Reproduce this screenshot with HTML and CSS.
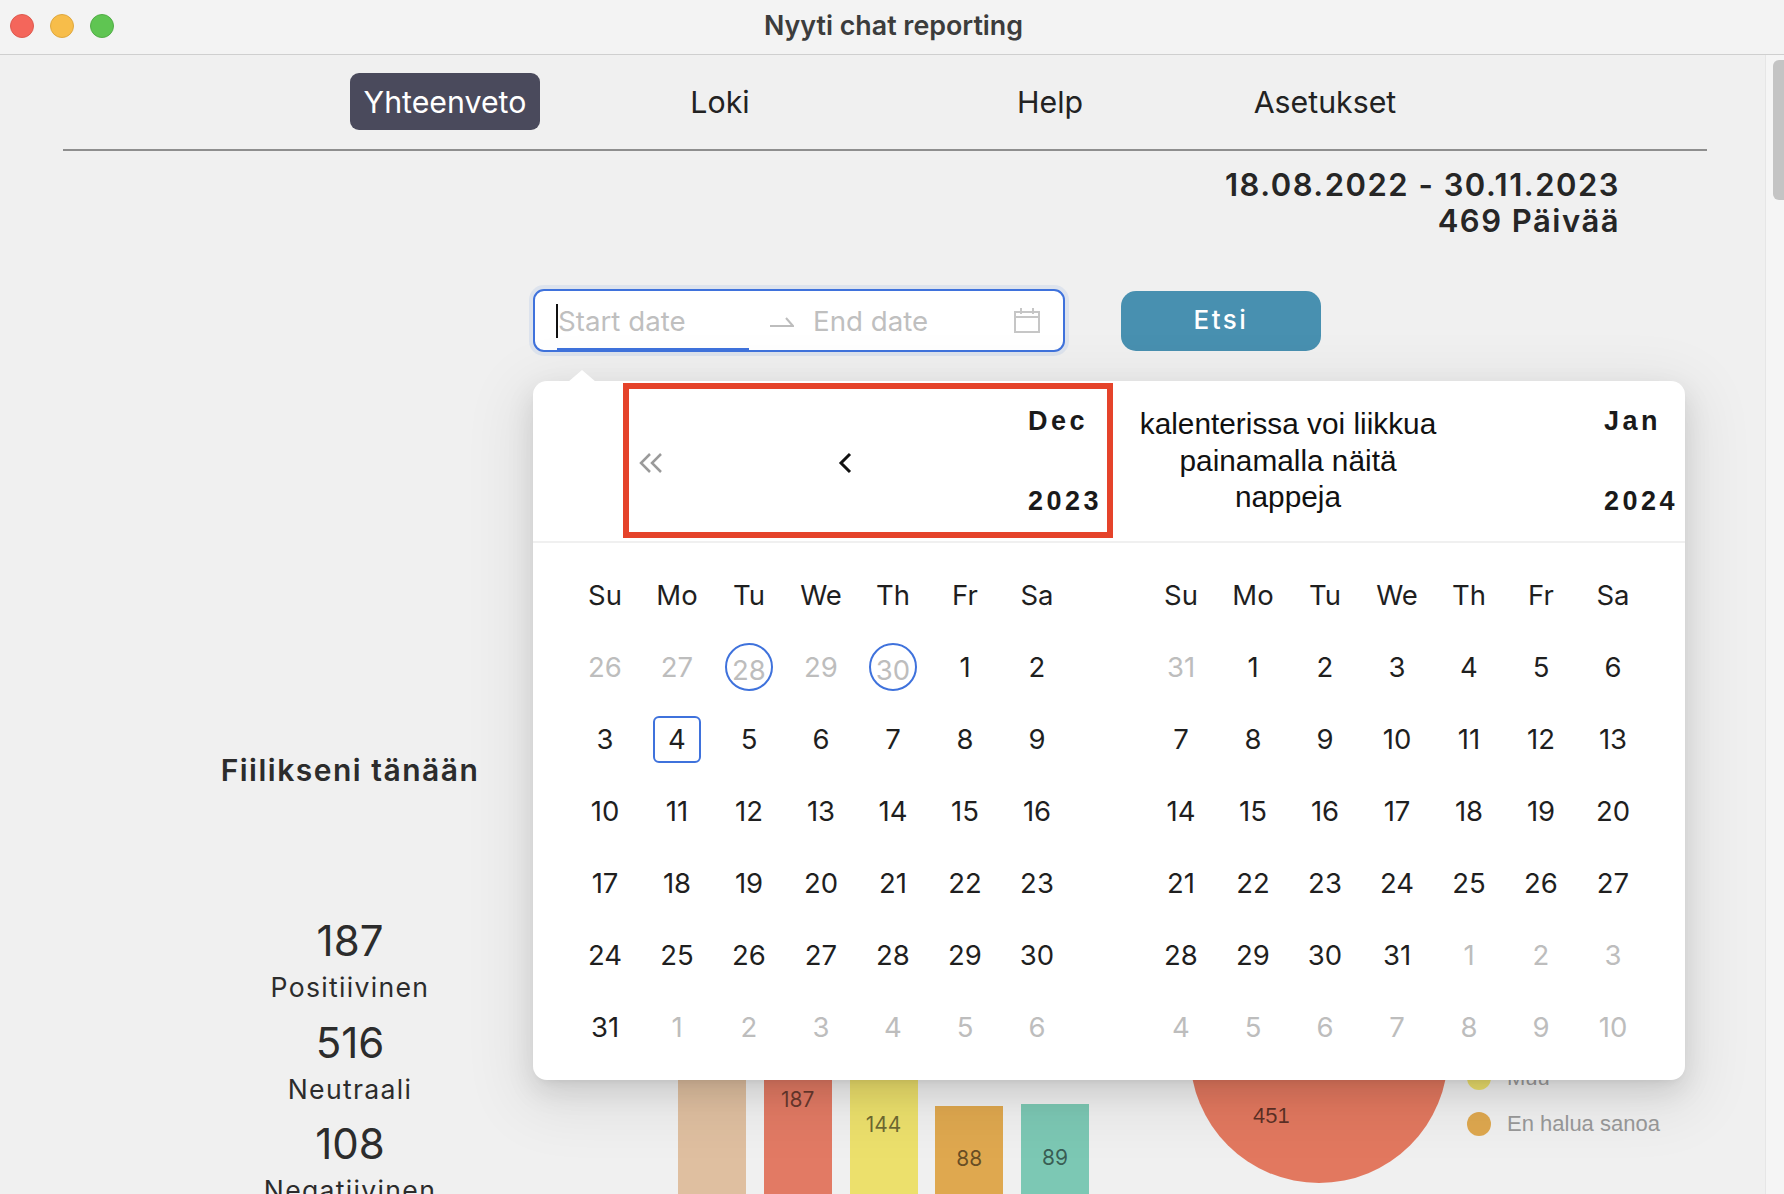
FILE: index.html
```html
<!DOCTYPE html>
<html lang="fi">
<head>
    <meta charset="UTF-8">
    <meta name="viewport" content="width=device-width, initial-scale=1.0">
    <title>Nyyti chat reporting</title>
    <link rel="stylesheet" href="styles.css">
</head>
<body>

<div class="window">
    <div class="titlebar">
        <div class="lights">
            <span class="light light-red"></span>
            <span class="light light-yellow"></span>
            <span class="light light-green"></span>
        </div>
        <div class="window-title">Nyyti chat reporting</div>
    </div>

    <div class="main">
        <div class="content">
            <nav class="nav">
                <a class="nav-item active">Yhteenveto</a>
                <a class="nav-item">Loki</a>
                <a class="nav-item">Help</a>
                <a class="nav-item">Asetukset</a>
            </nav>

            <div class="period">
                <div>18.08.2022 - 30.11.2023</div>
                <div>469 Päivää</div>
            </div>

            <div class="filter">
                <div class="range">
                    <span class="range-start">Start date</span>
                    <svg class="range-arrow" width="24" height="10" viewBox="0 0 24 10"><path d="M0 9H23L16 1" fill="none" stroke="#bdbdbd" stroke-width="2"/></svg>
                    <span class="range-end">End date</span>
                    <svg class="range-icon" width="26" height="25" viewBox="0 0 26 25"><path d="M1 4H25V24H1ZM1 9H25M7 0V6M19 0V6" fill="none" stroke="#c6c6c6" stroke-width="2"/></svg>
                </div>
                <button class="search">Etsi</button>
            </div>

            <div class="dashboard">
                <div class="mood">
                    <h2 class="mood-title">Fiilikseni tänään</h2>
                    <div class="stats">
                        <div class="stat"><div class="stat-num">187</div><div class="stat-label">Positiivinen</div></div>
                        <div class="stat"><div class="stat-num">516</div><div class="stat-label">Neutraali</div></div>
                        <div class="stat"><div class="stat-num">108</div><div class="stat-label">Negatiivinen</div></div>
                    </div>
                </div>

                <div class="bars">
                    <div class="bar bar-tan" style="height: 340px"></div>
                    <div class="bar bar-red" style="height: 222px">187</div>
                    <div class="bar bar-yellow" style="height: 172px">144</div>
                    <div class="bar bar-orange" style="height: 104px">88</div>
                    <div class="bar bar-green" style="height: 106px">89</div>
                </div>

                <svg class="pie" width="258" height="258" viewBox="0 0 258 258">
                    <circle cx="129" cy="129" r="129" fill="#e2785f"/>
                    <text x="63" y="198" class="pie-label">451</text>
                </svg>

                <div class="legend">
                    <div class="legend-row"><span class="dot dot-yellow"></span>Muu</div>
                    <div class="legend-row"><span class="dot dot-orange"></span>En halua sanoa</div>
                </div>
            </div>
        </div>

        <div class="scrollbar"><div class="thumb"></div></div>
    </div>

    <div class="picker">
        <div class="picker-arrow"></div>
        <div class="note-box"></div>

        <div class="month">
            <div class="month-head head-left">
                <svg class="chevron" width="24" height="20" viewBox="0 0 24 20"><path d="M11 1L2 10L11 19M22 1L13 10L22 19" fill="none" stroke="#9a9a9a" stroke-width="2.5"/></svg>
                <svg class="chevron" width="14" height="22" viewBox="0 0 14 22"><path d="M12 2L3 11L12 20" fill="none" stroke="#111" stroke-width="3"/></svg>
                <div class="month-title"><span>Dec</span><span>2023</span></div>
            </div>
            <div class="days">
                <b>Su</b><b>Mo</b><b>Tu</b><b>We</b><b>Th</b><b>Fr</b><b>Sa</b>
                <i>26</i><i>27</i><i class="ring"><em>28</em></i><i>29</i><i class="ring"><em>30</em></i><span>1</span><span>2</span>
                <span>3</span><span class="today"><em>4</em></span><span>5</span><span>6</span><span>7</span><span>8</span><span>9</span>
                <span>10</span><span>11</span><span>12</span><span>13</span><span>14</span><span>15</span><span>16</span>
                <span>17</span><span>18</span><span>19</span><span>20</span><span>21</span><span>22</span><span>23</span>
                <span>24</span><span>25</span><span>26</span><span>27</span><span>28</span><span>29</span><span>30</span>
                <span>31</span><i>1</i><i>2</i><i>3</i><i>4</i><i>5</i><i>6</i>
            </div>
        </div>

        <div class="month">
            <div class="month-head head-right">
                <div class="note">kalenterissa voi liikkua<br>painamalla näitä<br>nappeja</div>
                <div class="month-title title-right"><span>Jan</span><span>2024</span></div>
            </div>
            <div class="days">
                <b>Su</b><b>Mo</b><b>Tu</b><b>We</b><b>Th</b><b>Fr</b><b>Sa</b>
                <i>31</i><span>1</span><span>2</span><span>3</span><span>4</span><span>5</span><span>6</span>
                <span>7</span><span>8</span><span>9</span><span>10</span><span>11</span><span>12</span><span>13</span>
                <span>14</span><span>15</span><span>16</span><span>17</span><span>18</span><span>19</span><span>20</span>
                <span>21</span><span>22</span><span>23</span><span>24</span><span>25</span><span>26</span><span>27</span>
                <span>28</span><span>29</span><span>30</span><span>31</span><i>1</i><i>2</i><i>3</i>
                <i>4</i><i>5</i><i>6</i><i>7</i><i>8</i><i>9</i><i>10</i>
            </div>
        </div>
    </div>
</div>

</body>
</html>
```

FILE: styles.css
```css
* {
    box-sizing: border-box;
}
body {
    margin: 0;
    font-family: Inter, "Noto Sans", sans-serif;
    color: #222;
    background-color: #f0f0f0;
}
.window {
    position: relative;
    width: 1784px;
    height: 1194px;
    overflow: hidden;
    display: flex;
    flex-direction: column;
}

/* title bar */
.titlebar {
    height: 55px;
    flex: none;
    display: flex;
    align-items: center;
    position: relative;
    background-color: #f3f3f3;
    border-bottom: 1px solid #cfcfcf;
}
.lights {
    display: flex;
    gap: 16px;
    padding-left: 10px;
    margin-top: -2px;
}
.light {
    width: 24px;
    height: 24px;
    border-radius: 50%;
}
.light-red {
    background-color: #f4665b;
    border: 1px solid #de5a4f;
}
.light-yellow {
    background-color: #f7bd4a;
    border: 1px solid #dfa83f;
}
.light-green {
    background-color: #5fc552;
    border: 1px solid #52ad47;
}
.window-title {
    position: absolute;
    left: 3px;
    right: 0;
    top: 9px;
    text-align: center;
    font-size: 26.8px;
    line-height: 32px;
    font-weight: 600;
    color: #3c3c3c;
}

/* page */
.main {
    flex: 1;
    display: flex;
    min-height: 0;
}
.content {
    flex: 1;
    padding: 0 58px 0 63px;
}
.scrollbar {
    width: 19px;
    flex: none;
    padding: 5px 0 0 7px;
    background-color: #f5f5f5;
    border-left: 1px solid #e6e6e6;
}
.thumb {
    height: 140px;
    background-color: #c4c4c4;
    border-radius: 6px 0 0 6px;
}
.nav {
    height: 96px;
    padding: 18px 0 0 287px;
    display: grid;
    grid-template-columns: 190px 360px 300px 250px;
    justify-items: center;
    align-items: start;
    border-bottom: 2px solid #8e8e8e;
}
.nav-item {
    height: 57px;
    line-height: 59px;
    font-size: 30.3px;
    color: #222;
}
.nav-item.active {
    width: 190px;
    text-align: center;
    color: #fff;
    background-color: #4a4a5c;
    border-radius: 9px;
}
.period {
    margin-top: 16px;
    padding-right: 87px;
    text-align: right;
    font-size: 31px;
    line-height: 36px;
    font-weight: 600;
    letter-spacing: 1.5px;
    color: #262626;
}

/* date filter */
.filter {
    margin-top: 50px;
    padding-left: 470px;
    display: flex;
    align-items: center;
    gap: 56px;
}
.range {
    position: relative;
    width: 532px;
    height: 63px;
    padding-left: 21px;
    display: flex;
    align-items: center;
    font-size: 27.7px;
    color: #bfbfbf;
    background-color: #fff;
    border: 2px solid #3f72dc;
    border-radius: 11px;
    box-shadow: 0 0 0 4px rgba(63, 114, 220, 0.1);
}
.range-start {
    width: 214px;
    border-left: 2px solid #111;
    line-height: 34px;
}
.range-start::after {
    content: "";
    position: absolute;
    left: 22px;
    bottom: -2px;
    width: 192px;
    height: 4px;
    background-color: #3f72dc;
}
.range-arrow {
    flex: none;
    margin-top: 2px;
}
.range-end {
    margin-left: 19px;
    width: 202px;
}
.range-icon {
    flex: none;
    margin-left: -1px;
}
.search {
    width: 200px;
    height: 60px;
    padding: 0 0 2px;
    border: none;
    border-radius: 15px;
    font-family: inherit;
    font-size: 26px;
    font-weight: 500;
    letter-spacing: 2.5px;
    color: #fff;
    background-color: #4890b0;
}

/* stats and charts below the picker */
.dashboard {
    margin-top: 398px;
    height: 460px;
    display: flex;
    align-items: flex-start;
}
.mood {
    width: 574px;
    flex: none;
    text-align: center;
}
.mood-title {
    margin: 0;
    font-size: 30px;
    line-height: 40px;
    font-weight: 600;
    letter-spacing: 1.5px;
    color: #2c2c2c;
}
.stats {
    margin-top: 126px;
}
.stat {
    height: 101.5px;
}
.stat-num {
    font-size: 42px;
    line-height: 50px;
    color: #2c2c2c;
}
.stat-label {
    margin-top: 3px;
    font-size: 26.6px;
    line-height: 36px;
    letter-spacing: 1.3px;
    color: #2c2c2c;
}
.bars {
    margin-left: 41px;
    height: 460px;
    display: flex;
    align-items: flex-end;
    gap: 17.75px;
}
.bar {
    width: 68px;
    display: flex;
    align-items: center;
    justify-content: center;
    font-size: 21px;
    color: rgba(0, 0, 0, 0.55);
}
.bar-tan {
    background-color: #dfbfa0;
}
.bar-red {
    background-color: #e27a64;
}
.bar-yellow {
    background-color: #ece06c;
}
.bar-orange {
    background-color: #dfa84f;
}
.bar-green {
    background-color: #7cc8b4;
}
.pie {
    flex: none;
    margin: 175px 0 0 101px;
}
.pie-label {
    font-family: "Liberation Sans", sans-serif;
    font-size: 22px;
    fill: rgba(0, 0, 0, 0.6);
}
.legend {
    margin: 305px 0 0 19px;
    font-family: "Liberation Sans", sans-serif;
    font-size: 22px;
    color: #999;
}
.legend-row {
    height: 46px;
    display: flex;
    align-items: center;
    gap: 16px;
    white-space: nowrap;
}
.dot {
    width: 24px;
    height: 24px;
    border-radius: 50%;
}
.dot-yellow {
    background-color: #ece06c;
}
.dot-orange {
    background-color: #dfa84f;
}

/* date picker popup */
.picker {
    position: absolute;
    left: 533px;
    top: 381px;
    width: 1152px;
    height: 699px;
    display: grid;
    grid-template-columns: 576px 576px;
    align-content: start;
    background-color: #fff;
    border-radius: 14px;
    box-shadow: 0 11px 28px rgba(0, 0, 0, 0.1), 0 5px 11px -7px rgba(0, 0, 0, 0.12), 0 16px 60px 16px rgba(0, 0, 0, 0.07);
}
.picker-arrow {
    position: absolute;
    left: 35px;
    top: -11px;
    width: 0;
    height: 0;
    border-left: 14px solid transparent;
    border-right: 14px solid transparent;
    border-bottom: 12px solid #fff;
}
.note-box {
    position: absolute;
    left: 90px;
    top: 2px;
    width: 490px;
    height: 155px;
    border: 6px solid #e5432a;
}
.month-head {
    height: 162px;
    display: grid;
    align-items: center;
    border-bottom: 2px solid #f0f0f0;
}
.head-left {
    padding-left: 106px;
    grid-template-columns: 199px 190px auto;
}
.head-right {
    grid-template-columns: 358px auto;
}
.chevron {
    margin-top: 3px;
}
.month-title {
    display: flex;
    flex-direction: column;
    gap: 50px;
    font-family: "Liberation Sans", sans-serif;
    font-size: 27px;
    line-height: 30px;
    font-weight: 700;
    letter-spacing: 3.5px;
    color: #1a1a1a;
}
.title-right {
    margin-left: 137px;
}
.note {
    text-align: center;
    font-family: "Liberation Sans", sans-serif;
    font-size: 29.8px;
    line-height: 36.5px;
    color: #111;
}
.days {
    padding: 16px 36px 0;
    display: grid;
    grid-template-columns: repeat(7, 72px);
    grid-auto-rows: 72px;
    font-size: 27.5px;
    color: #1f1f1f;
}
.days > * {
    display: flex;
    align-items: center;
    justify-content: center;
    font-style: normal;
    font-weight: 400;
}
.days i {
    color: #bdbdbd;
}
.days em {
    font-style: normal;
    display: flex;
    align-items: center;
    justify-content: center;
}
.ring em {
    width: 48px;
    height: 48px;
    padding-top: 5px;
    border: 2px solid #3f72dc;
    border-radius: 50%;
}
.today em {
    width: 48px;
    height: 47px;
    border: 2px solid #3f72dc;
    border-radius: 6px;
}
```
